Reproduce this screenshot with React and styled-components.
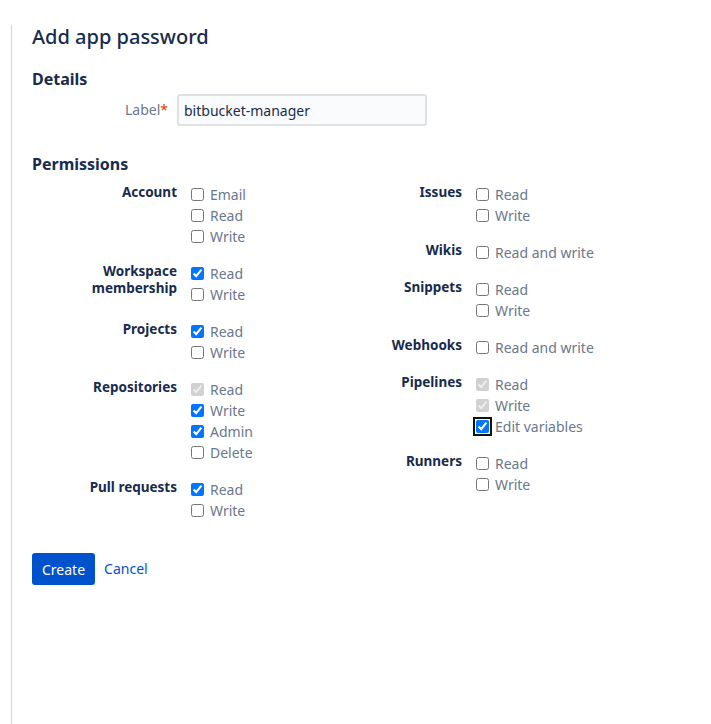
import styled, { createGlobalStyle } from "styled-components";

const GlobalStyle = createGlobalStyle`
  html, body {
    margin: 0;
    padding: 0;
    background: #ffffff;
  }
  body {
    font-family: "Noto Sans", "Open Sans", sans-serif;
    color: #172b4d;
  }
`;

const Page = styled.div`
  margin: 25px 0 0 11px;
  min-height: 699px;
  border-left: 1px solid #d4d4d4;
  padding-left: 20px;
  box-sizing: border-box;
`;

const Title = styled.h1`
  margin: 0;
  font-size: 20px;
  line-height: 24px;
  font-weight: 500;
  color: #172b4d;
`;

const SectionTitle = styled.h2`
  margin: ${(props) => props.top || 20}px 0 0;
  font-size: 16px;
  line-height: 20px;
  font-weight: 700;
  color: #172b4d;
`;

const FieldRow = styled.div`
  display: flex;
  align-items: center;
  margin-top: 5px;
`;

const FieldLabel = styled.label`
  width: 136px;
  text-align: right;
  font-size: 14px;
  color: #6b778c;
  padding-right: 9px;
  margin-top: -2px;
  span {
    color: #de350b;
  }
`;

const TextInput = styled.input`
  width: 250px;
  height: 32px;
  box-sizing: border-box;
  border: 2px solid #dfe1e6;
  border-radius: 3px;
  background: #fafbfc;
  padding: 0 5px;
  font-family: inherit;
  font-size: 14px;
  color: #172b4d;
  outline: none;
`;

const Columns = styled.div`
  display: grid;
  grid-template-columns: 285px 285px;
  margin-top: 10px;
`;

const Column = styled.div`
  display: flex;
  flex-direction: column;
  gap: 16px;
`;

const Group = styled.div`
  display: grid;
  grid-template-columns: 145px 1fr;
`;

const GroupLabel = styled.div`
  text-align: right;
  font-size: 13.5px;
  font-weight: 700;
  line-height: 16.5px;
  color: #172b4d;
`;

const Options = styled.div`
  display: flex;
  flex-direction: column;
  padding-left: 11px;
`;

const Option = styled.label`
  display: flex;
  align-items: center;
  height: 21px;
  font-size: 14px;
  color: #6b778c;

  input {
    margin: 0 6px 0 3px;
    width: 13px;
    height: 13px;
    outline: ${(props) => (props.focused ? "2px solid #101214" : "none")};
    outline-offset: 1px;
    border-radius: 2px;
  }
`;

const Actions = styled.div`
  display: flex;
  align-items: center;
  gap: 9px;
  margin-top: 32px;
`;

const PrimaryButton = styled.button`
  height: 32px;
  padding: 0 10px;
  border: none;
  border-radius: 3px;
  background: #0052cc;
  color: #ffffff;
  font-family: inherit;
  font-size: 14px;
`;

const LinkButton = styled.a`
  color: #0052cc;
  font-size: 14px;
  text-decoration: none;
  margin-top: -2px;
`;

const left = [
  { label: ["Account"], options: [["Email"], ["Read"], ["Write"]] },
  { label: ["Workspace", "membership"], options: [["Read", "on"], ["Write"]] },
  { label: ["Projects"], options: [["Read", "on"], ["Write"]] },
  {
    label: ["Repositories"],
    options: [["Read", "dis"], ["Write", "on"], ["Admin", "on"], ["Delete"]],
  },
  { label: ["Pull requests"], options: [["Read", "on"], ["Write"]] },
];

const right = [
  { label: ["Issues"], options: [["Read"], ["Write"]] },
  { label: ["Wikis"], options: [["Read and write"]] },
  { label: ["Snippets"], options: [["Read"], ["Write"]] },
  { label: ["Webhooks"], options: [["Read and write"]] },
  {
    label: ["Pipelines"],
    options: [["Read", "dis"], ["Write", "dis"], ["Edit variables", "focus"]],
  },
  { label: ["Runners"], options: [["Read"], ["Write"]] },
];

const PermGroup = ({ group }) => (
  <Group>
    <GroupLabel>
      {group.label.map((l) => (
        <div key={l}>{l}</div>
      ))}
    </GroupLabel>
    <Options>
      {group.options.map(([name, state]) => (
        <Option key={name} focused={state === "focus"}>
          <input
            type="checkbox"
            defaultChecked={!!state}
            disabled={state === "dis"}
          />
          {name}
        </Option>
      ))}
    </Options>
  </Group>
);

const App = () => (
  <>
    <GlobalStyle />
    <Page>
      <Title>Add app password</Title>
      <SectionTitle top={20}>Details</SectionTitle>
      <FieldRow>
        <FieldLabel>
          Label<span>*</span>
        </FieldLabel>
        <TextInput defaultValue="bitbucket-manager" />
      </FieldRow>
      <SectionTitle top={28}>Permissions</SectionTitle>
      <Columns>
        <Column>
          {left.map((g) => (
            <PermGroup key={g.label[0]} group={g} />
          ))}
        </Column>
        <Column>
          {right.map((g) => (
            <PermGroup key={g.label[0]} group={g} />
          ))}
        </Column>
      </Columns>
      <Actions>
        <PrimaryButton>Create</PrimaryButton>
        <LinkButton href="#">Cancel</LinkButton>
      </Actions>
    </Page>
  </>
);

export default App;
